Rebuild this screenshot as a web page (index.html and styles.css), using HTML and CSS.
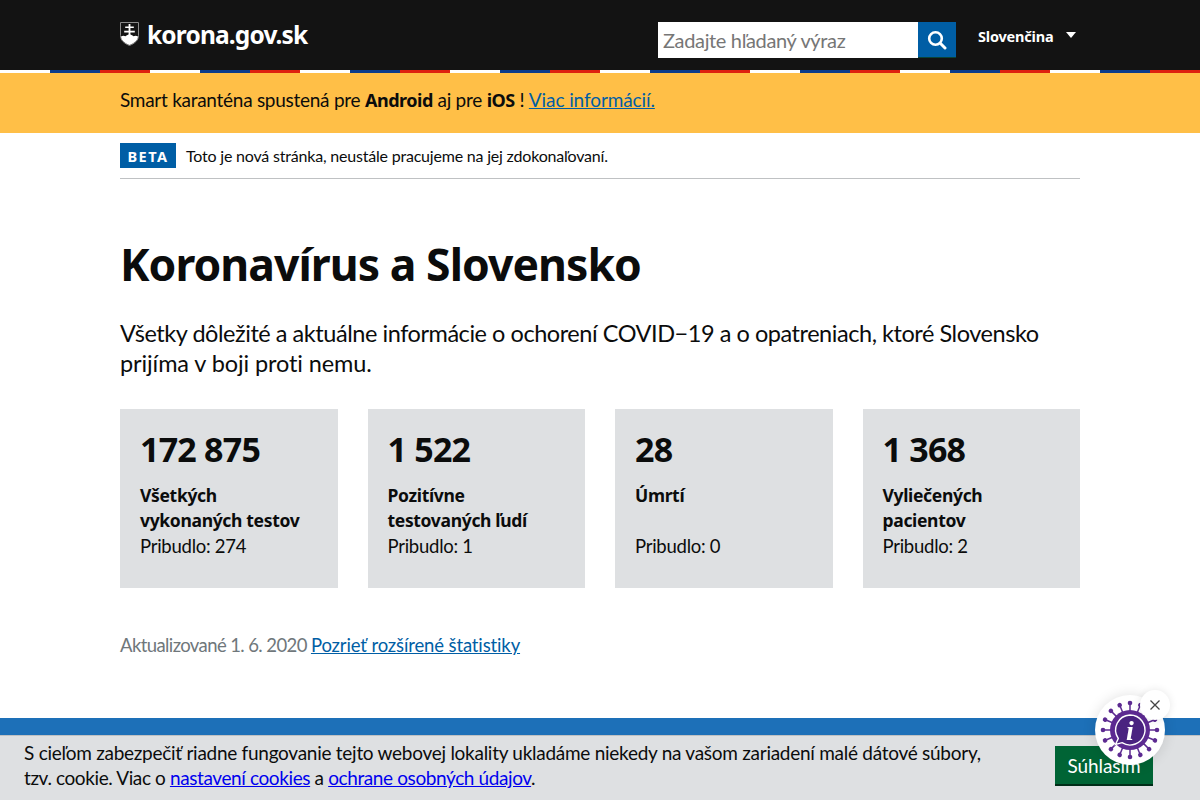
FILE: index.html
```html
<!DOCTYPE html>
<html lang="sk">
<head>
<meta charset="utf-8">
<title>Koronavírus a Slovensko</title>
<link rel="stylesheet" href="styles.css">
</head>
<body>
<header class="site-header">
  <div class="wrap header-row">
    <a class="logo" href="#">
      <svg class="shield" width="19" height="24" viewBox="0 0 19 24">
        <path d="M.5.5h18v13c0 5-4 8-9 10-5-2-9-5-9-10z" fill="#141414" stroke="#8a8a8a"/>
        <path d="M8.6 2h1.8v2.4h3.4v1.7h-3.4v2.6h4.4v1.7h-4.4v4H8.600v-4H4.200V8.700h4.400V6.100H5.200V4.400h3.400z" fill="#fff"/>
        <path d="M1 14.500c1.500-1 3-1 4.500-.2 1.200-1.200 2.800-1.700 4-1.700s2.800.5 4 1.700c1.500-.8 3-.8 4.500.2-.3 4-3.800 6.700-8.500 8.500C4.800 21.200 1.300 18.500 1 14.500z" fill="#fff"/>
      </svg>
      <span class="logo-text">korona.gov.sk</span>
    </a>
    <div class="tools">
      <form class="search">
        <input class="search-input" type="text" placeholder="Zadajte hľadaný výraz">
        <button class="search-btn" type="button" aria-label="Hľadať">
          <svg width="20" height="20" viewBox="0 0 20 20" fill="none" stroke="#fff">
            <circle cx="8.500" cy="8.500" r="6.300" stroke-width="2.600"/>
            <path d="M13.300 13.300l4.700 4.700" stroke-width="3" stroke-linecap="round"/>
          </svg>
        </button>
      </form>
      <div class="lang"><span>Slovenčina</span><i class="caret"></i></div>
    </div>
  </div>
</header>
<div class="stripes"></div>
<div class="notice">
  <div class="wrap">Smart karanténa spustená pre <b>Android</b> aj pre <b>iOS</b> ! <a href="#">Viac informácií.</a></div>
</div>
<main class="wrap">
  <div class="beta"><strong class="beta-tag">BETA</strong><span class="beta-text">Toto je nová stránka, neustále pracujeme na jej zdokonaľovaní.</span></div>
  <h1 class="title">Koronavírus a Slovensko</h1>
  <p class="lead">Všetky dôležité a aktuálne informácie o ochorení COVID−19 a o opatreniach, ktoré Slovensko <span class="lead-end">prijíma v boji proti nemu.</span></p>
  <section class="stats">
    <article class="card"><div class="num">172 875</div><div class="label">Všetkých vykonaných testov</div><div class="delta">Pribudlo: 274</div></article>
    <article class="card"><div class="num">1 522</div><div class="label">Pozitívne testovaných ľudí</div><div class="delta">Pribudlo: 1</div></article>
    <article class="card"><div class="num">28</div><div class="label">Úmrtí</div><div class="delta">Pribudlo: 0</div></article>
    <article class="card"><div class="num">1 368</div><div class="label">Vyliečených pacientov</div><div class="delta">Pribudlo: 2</div></article>
  </section>
  <p class="updated">Aktualizované 1. 6. 2020 <a href="#">Pozrieť rozšírené štatistiky</a></p>
</main>
<footer class="band"></footer>
<div class="cookie">
  <p class="cookie-text">S cieľom zabezpečiť riadne fungovanie tejto webovej lokality ukladáme niekedy na vašom zariadení malé dátové súbory, <span class="cookie-end">tzv. cookie. Viac o <a href="#">nastavení cookies</a> a <a href="#">ochrane osobných údajov</a>.</span></p>
  <button class="agree" type="button">Súhlasím</button>
</div>
<div class="bot">
  <svg width="70" height="70" viewBox="0 0 70 70">
    <defs>
      <g id="spike"><path d="M35 35V9" stroke="#5c2a91" stroke-width="1.500"/><circle cx="35" cy="8" r="2.300" fill="#5c2a91"/></g>
    </defs>
    <use href="#spike"/>
    <use href="#spike" transform="rotate(22.5 35 35)"/>
    <use href="#spike" transform="rotate(45 35 35)"/>
    <use href="#spike" transform="rotate(67.5 35 35)"/>
    <use href="#spike" transform="rotate(90 35 35)"/>
    <use href="#spike" transform="rotate(112.5 35 35)"/>
    <use href="#spike" transform="rotate(135 35 35)"/>
    <use href="#spike" transform="rotate(157.5 35 35)"/>
    <use href="#spike" transform="rotate(180 35 35)"/>
    <use href="#spike" transform="rotate(202.5 35 35)"/>
    <use href="#spike" transform="rotate(225 35 35)"/>
    <use href="#spike" transform="rotate(247.500 35 35)"/>
    <use href="#spike" transform="rotate(270 35 35)"/>
    <use href="#spike" transform="rotate(292.5 35 35)"/>
    <use href="#spike" transform="rotate(315 35 35)"/>
    <use href="#spike" transform="rotate(337.5 35 35)"/>
    <circle cx="35" cy="35" r="20" fill="#5c2a91"/>
    <path d="M35 20a15 15 0 1 1-8 27.700l-6.500 1.800 2.800-6a15 15 0 0 1 11.700-23.500z" fill="#4a2380" stroke="#fff" stroke-width="1.400"/>
    <text class="bot-i" x="35" y="45" text-anchor="middle">i</text>
  </svg>
</div>
<button class="bot-close" type="button" aria-label="Zavrieť">
  <svg width="12" height="12" viewBox="0 0 12 12"><path d="M1.500 1.500l9 9M10.500 1.500l-9 9" stroke="#444" stroke-width="1.300"/></svg>
</button>
</body>
</html>
```
FILE: styles.css
```css
* { box-sizing: border-box; }
html, body { margin: 0; height: 800px; overflow: hidden; }
body {
  font-family: "Lato", "Noto Sans", sans-serif;
  color: #0b0c0c;
  background: #fff;
  display: flex;
  flex-direction: column;
}
.wrap { width: 960px; margin: 0 auto; }
a { color: #005ea5; }
b, strong, h1, .num, .label, .logo-text, .lang { font-family: "Noto Sans", sans-serif; }

.site-header { background: #131313; height: 70px; flex: none; }
.header-row { display: flex; justify-content: space-between; height: 70px; }
.logo { display: flex; align-items: flex-start; gap: 8px; padding-top: 22px; color: #fff; text-decoration: none; }
.shield { display: block; }
.logo-text { font-size: 24.500px; font-weight: 700; line-height: 26px; letter-spacing: -.85px; }
.tools { display: flex; padding-top: 22px; }
.search { display: flex; width: 298px; height: 36px; margin: 0; }
.search-input {
  width: 260px; height: 36px; border: 0; padding: 0 5px; margin: 0;
  background: #fff; font: 20px "Lato", sans-serif; letter-spacing: -.35px; border-radius: 0; outline: 0;
}
.search-input::placeholder { color: #767676; opacity: 1; }
.search-btn { width: 38px; height: 36px; border: 0; border-bottom: 1px solid #0a4438; padding: 1px 0 0; background: #005ea5; display: flex; align-items: center; justify-content: center; }
.lang { display: flex; align-items: flex-start; width: 124px; padding: 4px 0 0 22px; color: #fff; font-size: 14.500px; font-weight: 700; line-height: 20px; letter-spacing: -.2px; }
.caret { margin: 6px 0 0 13px; border: 5px solid transparent; border-top: 6px solid #fff; border-bottom: 0; }

.stripes {
  height: 3px; flex: none;
  background: repeating-linear-gradient(90deg, #fff 0 50px, #0b3c8c 50px 100px, #de2010 100px 150px);
}
.notice { background: #ffbf47; height: 60px; flex: none; font-size: 19px; line-height: 54px; letter-spacing: -.27px; }
.notice b { font-weight: 700; font-size: 18px; letter-spacing: -.45px; }
.notice a { letter-spacing: -.1px; }

main { flex: none; }
.beta { display: flex; align-items: center; margin-top: 10px; padding-bottom: 10px; border-bottom: 1px solid #bfc1c3; }
.beta-tag { background: #005ea5; color: #fff; width: 56px; height: 25px; text-align: center; font-size: 14.500px; line-height: 27px; letter-spacing: 1.500px; font-weight: 700; }
.beta-text { margin-left: 10px; font-size: 16px; line-height: 25px; letter-spacing: -.2px; }
.title { margin: 58px 0 0; font-size: 44.500px; line-height: 54px; font-weight: 700; letter-spacing: -.95px; }
.lead { margin: 27px 0 0; font-size: 23.500px; line-height: 30px; letter-spacing: -.45px; }
.lead-end { letter-spacing: -.1px; }

.stats { display: grid; grid-template-columns: repeat(4, 1fr); gap: 30px; margin-top: 31px; }
.card { background: #dee0e2; height: 179px; padding: 19px 20px 0; }
.num { font-size: 34px; font-weight: 700; line-height: 42px; letter-spacing: -.77px; }
.label { margin-top: 13px; height: 50px; max-width: 165px; font-size: 17.500px; line-height: 25px; font-weight: 700; letter-spacing: -.33px; }
.delta { margin-top: 1px; font-size: 18.500px; line-height: 25px; letter-spacing: -.25px; }
.updated { margin: 44px 0 0; font-size: 18.500px; line-height: 26px; color: #6f777b; letter-spacing: -.6px; }
.updated a { letter-spacing: -.13px; }

.band { flex: 1; margin-top: 60px; background: #1d70b8; }

.cookie {
  position: fixed; left: 0; right: 0; bottom: 0; height: 65px;
  display: flex; justify-content: space-between; align-items: flex-start;
  padding: 4px 47px 0 24px;
  background: #dee0e2; border-top: 1px solid #bfc1c3;
}
.cookie-text { margin: 0; width: 970px; font-size: 19px; line-height: 25px; letter-spacing: -.27px; }
.cookie-end { letter-spacing: -.39px; }
.cookie-text a { color: #0000ee; }
.agree {
  width: 98px; height: 40px; margin-top: 6px; border: 0; border-bottom: 2px solid #002d18;
  background: #006435; color: #fff; font: 19px "Lato", sans-serif; letter-spacing: -.1px; padding: 0;
}
.bot {
  position: fixed; left: 1095px; top: 695px; width: 70px; height: 70px;
  border-radius: 50%; background: #fff; box-shadow: 0 0 14px rgba(0,0,0,.12);
}
.bot svg { display: block; }
.bot-i { font: italic 700 28px "Liberation Serif", serif; fill: #fff; }
.bot-close {
  position: fixed; left: 1140px; top: 690px; width: 30px; height: 30px; padding: 0; border: 0;
  border-radius: 50%; background: #fff; box-shadow: 0 0 8px rgba(0,0,0,.1);
  display: flex; align-items: center; justify-content: center;
}
```
